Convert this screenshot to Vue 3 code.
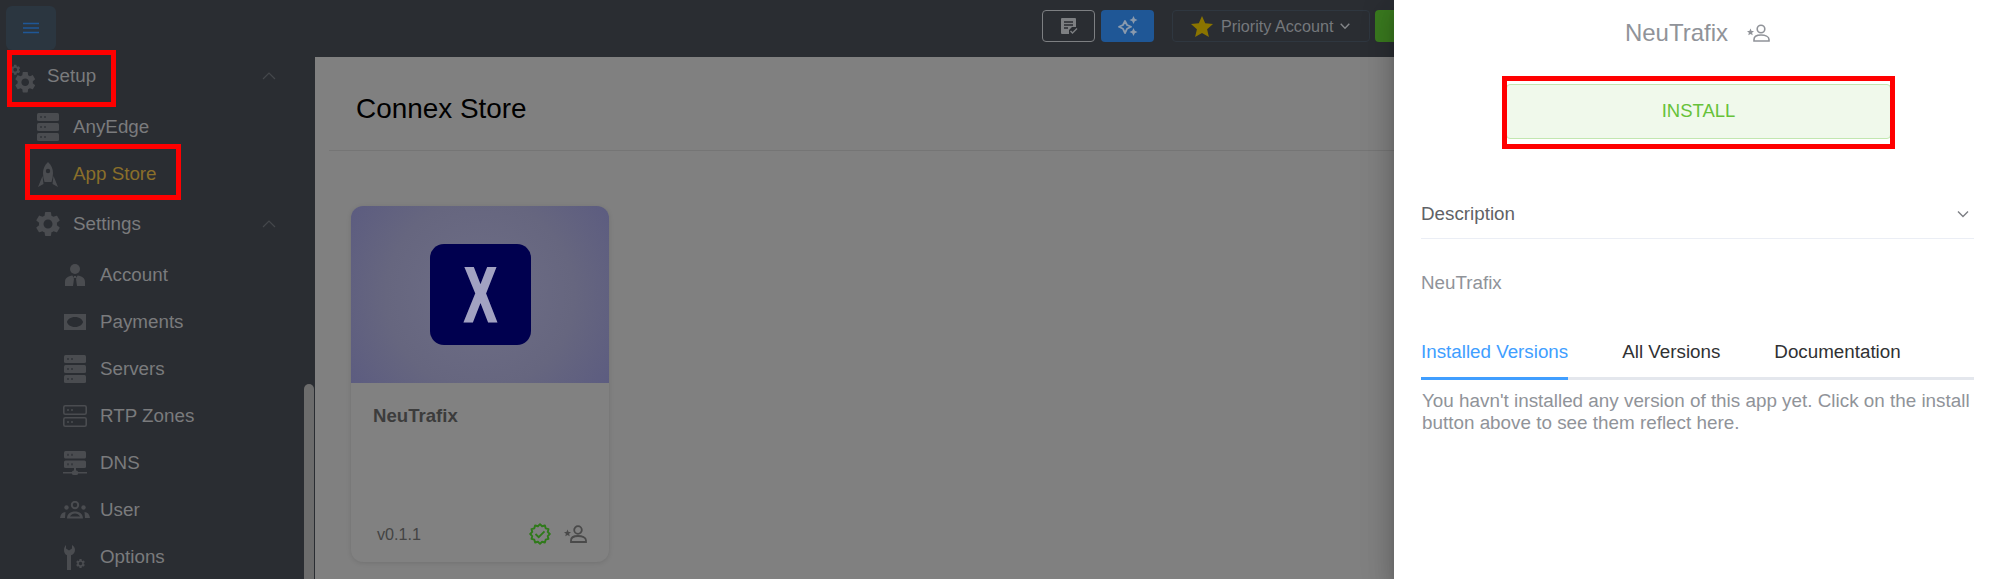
<script setup>
const rows = [
  { label: 'Setup', icon: 'gears', level: 1, chevron: true },
  { label: 'AnyEdge', icon: 'server3', level: 2 },
  { label: 'App Store', icon: 'rocket', level: 2, active: true },
  { label: 'Settings', icon: 'gear', level: 2, chevron: true },
  { label: 'Account', icon: 'person', level: 3 },
  { label: 'Payments', icon: 'money', level: 3 },
  { label: 'Servers', icon: 'server3', level: 3 },
  { label: 'RTP Zones', icon: 'server2', level: 3 },
  { label: 'DNS', icon: 'dns', level: 3 },
  { label: 'User', icon: 'group', level: 3 },
  { label: 'Options', icon: 'tools', level: 3 }
]
const tabs = ['Installed Versions', 'All Versions', 'Documentation']
const badge = Array.from({ length: 24 }, (_, i) => {
  const r = i % 2 ? 8 : 9.8
  const a = (i * Math.PI) / 12
  return `${(11 + r * Math.sin(a)).toFixed(2)},${(11 - r * Math.cos(a)).toFixed(2)}`
}).join(' ')
const GEAR = 'M19.14 12.94c.04-.3.06-.61.06-.94 0-.32-.02-.64-.07-.94l2.03-1.58c.18-.14.23-.41.12-.61l-1.92-3.32c-.12-.22-.37-.29-.59-.22l-2.39.96c-.5-.38-1.03-.7-1.62-.94l-.36-2.54c-.04-.24-.24-.41-.48-.41h-3.84c-.24 0-.43.17-.47.41l-.36 2.54c-.59.24-1.13.57-1.62.94l-2.39-.96c-.22-.08-.47 0-.59.22L2.74 8.87c-.12.21-.08.47.12.61l2.03 1.58c-.05.3-.09.63-.09.94s.02.64.07.94l-2.03 1.58c-.18.14-.23.41-.12.61l1.92 3.32c.12.22.37.29.59.22l2.39-.96c.5.38 1.03.7 1.62.94l.36 2.54c.05.24.24.41.48.41h3.84c.24 0 .44-.17.47-.41l.36-2.54c.59-.24 1.13-.56 1.62-.94l2.39.96c.22.08.47 0 .59-.22l1.92-3.32c.12-.22.07-.47-.12-.61l-2.01-1.58zM12 15.6c-1.98 0-3.6-1.62-3.6-3.6s1.62-3.6 3.6-3.6 3.6 1.62 3.6 3.6-1.62 3.6-3.6 3.6z'
</script>

<template>
  <div class="page">
    <header class="topbar">
      <button class="burger" aria-label="menu">
        <svg width="18" height="12" viewBox="0 0 18 12"><path d="M1 1.5h16M1 6h16M1 10.5h16" stroke="#1f5796" stroke-width="1.6" /></svg>
      </button>
      <div class="spacer"></div>
      <button class="tbtn outline" aria-label="notes">
        <svg width="18" height="18" viewBox="0 0 18 18">
          <path d="M2 1h13a1 1 0 0 1 1 1V10h-4l-3 3v4H2a1 1 0 0 1-1-1V2a1 1 0 0 1 1-1z" fill="#7d7f82" />
          <path d="M4 5h9M4 8h9M4 11h4" stroke="#2a2d32" stroke-width="1.5" />
          <path d="M10.5 14l2 2 4.5-4.5" fill="none" stroke="#7d7f82" stroke-width="1.4" />
        </svg>
      </button>
      <button class="tbtn blue" aria-label="spark">
        <svg width="20" height="20" viewBox="0 0 20 20" fill="none">
          <path d="M7 5l2 4 4 1.800-4 2L7 17l-2-4.200-4-2 4-1.800z" stroke="#8a9aad" stroke-width="1.800" stroke-linejoin="round" />
          <path d="M15.500 0l1.300 2.700L19.500 4l-2.700 1.300L15.500 8l-1.300-2.700L11.500 4l2.700-1.300zM15.500 12l1.300 2.700 2.700 1.300-2.700 1.300L15.500 20l-1.300-2.700-2.700-1.300 2.700-1.300z" fill="#8a9aad" />
        </svg>
      </button>
      <button class="priority">
        <svg width="22" height="21" viewBox="0 0 22 21"><path d="M11 0l3.200 7.300 7.800.7-5.900 5.200 1.800 7.800L11 16.900 4.100 21l1.800-7.800L0 8l7.800-.7z" fill="#8a7400" /></svg>
        <span>Priority Account</span>
        <svg class="pchev" width="10" height="7" viewBox="0 0 10 7" fill="none"><path d="M.7.8L5 5.200 9.300.8" stroke="#85878a" stroke-width="1.400" /></svg>
      </button>
      <button class="green" aria-label="action"></button>
    </header>

    <div class="body">
      <aside class="sidebar">
        <div
          v-for="row in rows"
          :key="row.label"
          class="row"
          :class="[`level${row.level}`, { active: row.active, head: row.chevron }]"
        >
          <span class="ico">
            <svg v-if="row.icon === 'gears'" width="36" height="36" viewBox="0 0 36 36" class="gears">
              <path :d="GEAR" transform="translate(8.500 11.500) scale(1.060)" />
              <path :d="GEAR" transform="translate(5 5.500) scale(.520)" />
            </svg>
            <svg v-else-if="row.icon === 'server3'" width="22" height="28" viewBox="0 0 22 28">
              <g v-for="y in [0, 10, 20]" :key="y">
                <rect :y="y" width="22" height="8" rx="1.500" />
                <rect x="3" :y="y + 3" width="2" height="2" class="hole" />
                <rect x="7" :y="y + 3" width="2" height="2" class="hole" />
              </g>
            </svg>
            <svg v-else-if="row.icon === 'rocket'" width="20" height="25" viewBox="0 0 20 25">
              <path d="M10 0c3.500 3 5 7 5 11 0 3-.5 6-1.500 9h-7C5.500 17 5 14 5 11c0-4 1.500-8 5-11z" />
              <path d="M4.500 14L0 25l5.500-3zM15.500 14L20 25l-5.500-3z" />
              <circle cx="10" cy="9" r="2.200" class="holefill" />
            </svg>
            <svg v-else-if="row.icon === 'gear'" width="30" height="30" viewBox="0 0 24 24">
              <path :d="GEAR" />
            </svg>
            <svg v-else-if="row.icon === 'person'" width="20" height="22" viewBox="0 0 20 22">
              <circle cx="10" cy="5" r="5" />
              <path d="M0 22v-4c0-4 3-6 7.500-6.500L9 15l-1 7zM20 22v-4c0-4-3-6-7.500-6.500L11 15l1 7zM9 12h2l.5 2h-3z" />
            </svg>
            <svg v-else-if="row.icon === 'money'" width="22" height="16" viewBox="0 0 22 16">
              <path fill-rule="evenodd" d="M0 0h22v16H0zM11 3C6.500 3 3.500 5.500 3 8c.5 2.500 3.500 5 8 5s7.500-2.500 8-5c-.5-2.500-3.500-5-8-5z" />
            </svg>
            <svg v-else-if="row.icon === 'server2'" width="24" height="22" viewBox="0 0 24 22" fill="none">
              <rect x=".8" y=".8" width="22.400" height="8.400" rx="1.500" class="line" />
              <rect x=".8" y="12.800" width="22.400" height="8.400" rx="1.500" class="line" />
              <path d="M4 5h6M4 17h6" class="line" stroke-dasharray="2 2" />
            </svg>
            <svg v-else-if="row.icon === 'dns'" width="24" height="24" viewBox="0 0 24 24">
              <g v-for="y in [0, 9.500]" :key="y">
                <rect x="1" :y="y" width="22" height="7.500" rx="1.500" />
                <rect x="4" :y="y + 2.800" width="2" height="2" class="hole" />
                <rect x="8" :y="y + 2.800" width="2" height="2" class="hole" />
              </g>
              <path d="M11 17h2v4h-2zM0 21h24v1.500H0z" />
              <rect x="9" y="19.500" width="6" height="4.500" rx="1.500" />
            </svg>
            <svg v-else-if="row.icon === 'group'" width="30" height="18" viewBox="0 0 30 18">
              <circle cx="15" cy="4" r="3.200" fill="none" stroke-width="2" class="line2" />
              <circle cx="6.500" cy="6.500" r="2.200" />
              <circle cx="23.500" cy="6.500" r="2.200" />
              <path d="M0 17c.5-4 2.500-6 5.500-6L5 17zM30 17c-.5-4-2.500-6-5.500-6l.5 6z" />
              <path d="M7 17.500c0-4.500 3.500-7 8-7s8 2.500 8 7zM10 15.500h10c-1-2-3-3-5-3s-4 1-5 3z" fill-rule="evenodd" />
            </svg>
            <svg v-else-if="row.icon === 'tools'" width="22" height="25" viewBox="0 0 22 25">
              <path d="M2 0v3.500L5 5.500l3-2V0c2 1 3 3 3 5 0 2.500-1.500 4.500-4 5.300V25H3V10.300C1 9.500 0 7.500 0 5 0 3 .8 1 2 0z" />
              <path :d="GEAR" transform="translate(11 13) scale(.460)" />
            </svg>
          </span>
          <span class="label">{{ row.label }}</span>
          <svg v-if="row.chevron" class="chev" width="14" height="8" viewBox="0 0 14 8" fill="none"><path d="M1 7l6-6 6 6" stroke="#45484c" stroke-width="1.200" /></svg>
        </div>
        <div class="scrollbar"></div>
      </aside>

      <main class="main">
        <h1 class="title">Connex Store</h1>
        <div class="divider"></div>
        <article class="card">
          <div class="thumb">
            <div class="logo"><span class="x">X</span></div>
          </div>
          <div class="card-body">
            <h2 class="card-name">NeuTrafix</h2>
            <div class="card-foot">
              <span class="version">v0.1.1</span>
              <svg class="verified" width="22" height="22" viewBox="0 0 22 22" fill="none">
                <polygon :points="badge" stroke="#2f7a1a" stroke-width="1.900" stroke-linejoin="round" />
                <path d="M6.500 11l3.200 3.200 5.800-5.800" stroke="#2f7a1a" stroke-width="1.900" />
              </svg>
              <svg width="23" height="18" viewBox="0 0 23 18" fill="none">
                <circle cx="14" cy="5" r="3.800" stroke="#4a4a4a" stroke-width="1.800" />
                <path d="M7 17v-1.500C7 12.500 10 11 14 11s8 1.500 8 4.500V17z" stroke="#4a4a4a" stroke-width="1.800" />
                <path d="M3.500 4.500l1.100 2.400 2.400.2-1.900 1.700.6 2.500-2.200-1.300-2.200 1.300.6-2.500L0 7.100l2.400-.2z" fill="#4a4a4a" />
              </svg>
            </div>
          </div>
        </article>
      </main>
    </div>

    <section class="drawer">
      <div class="d-title">
        <span>NeuTrafix</span>
        <svg width="23" height="18" viewBox="0 0 23 18" fill="none">
          <circle cx="14" cy="5" r="3.800" stroke="#909399" stroke-width="1.600" />
          <path d="M7 17v-1.500C7 12.500 10 11 14 11s8 1.500 8 4.500V17z" stroke="#909399" stroke-width="1.600" />
          <path d="M3.500 4.500l1.100 2.400 2.400.2-1.900 1.700.6 2.500-2.200-1.300-2.200 1.300.6-2.500L0 7.100l2.400-.2z" fill="#909399" />
        </svg>
      </div>
      <button class="install">INSTALL</button>
      <div class="collapse-head">
        <span>Description</span>
        <svg width="12" height="8" viewBox="0 0 12 8" fill="none"><path d="M1 1.500l5 5 5-5" stroke="#7d7f84" stroke-width="1.400" /></svg>
      </div>
      <p class="desc">NeuTrafix</p>
      <div class="tabs">
        <span v-for="(tab, i) in tabs" :key="tab" class="tab" :class="{ on: i === 0 }">{{ tab }}</span>
      </div>
      <p class="empty">You havn't installed any version of this app yet. Click on the install button above to see them reflect here.</p>
    </section>

    <div class="mark mark-setup"></div>
    <div class="mark mark-store"></div>
    <div class="mark mark-install"></div>
  </div>
</template>

<style>
html, body { margin: 0; background: #808080; }
</style>

<style scoped>
.page {
  position: relative;
  width: 2000px;
  height: 579px;
  overflow: hidden;
  display: flex;
  flex-direction: column;
  font-family: "Liberation Sans", Arial, sans-serif;
  background: #808080;
}
button { font: inherit; padding: 0; cursor: pointer; }
.topbar {
  flex: 0 0 57px;
  display: flex;
  align-items: flex-start;
  background: #2a2d32;
  padding: 10px 545px 0 6px;
  box-sizing: border-box;
}
.burger {
  width: 50px;
  height: 44px;
  margin-top: -4px;
  border: 0;
  border-radius: 6px;
  background: #2b3640;
  display: flex;
  align-items: center;
  justify-content: center;
}
.spacer { flex: 1; }
.tbtn {
  width: 53px;
  height: 32px;
  border-radius: 4px;
  display: flex;
  align-items: center;
  justify-content: center;
  margin-right: 6px;
}
.outline { background: transparent; border: 1px solid #7d7f82; }
.blue { background: #1f5796; border: 0; margin-right: 18px; }
.priority {
  width: 198px;
  height: 32px;
  box-sizing: border-box;
  border: 1px solid #2f3740;
  border-radius: 4px;
  background: #2a2d32;
  color: #75787c;
  font-size: 16.200px;
  display: flex;
  align-items: center;
  padding-left: 18px;
  gap: 8px;
  margin-right: 5px;
}
.pchev { margin-left: -1px; }
.green { width: 80px; height: 32px; border: 0; border-radius: 4px; background: #3a7a1f; }

.body { flex: 1; display: flex; min-height: 0; }
.sidebar {
  position: relative;
  flex: 0 0 315px;
  background: #2a2d32;
  overflow: hidden;
}
.row {
  height: 47px;
  display: flex;
  align-items: center;
  font-size: 18.800px;
  color: #7a7b7d;
}
.row.head { height: 38px; margin-bottom: 8.500px; }
.row.level2.head { margin-top: 7.500px; margin-bottom: 8.500px; }
.level1 { padding-left: 4px; }
.level2 { padding-left: 30px; }
.level3 { padding-left: 57px; }
.ico {
  flex: 0 0 36px;
  margin-right: 7px;
  display: flex;
  justify-content: center;
  align-items: center;
  fill: #4a4c50;
}
.gears { overflow: visible; }
.hole { fill: #2a2d32; opacity: .6; }
.holefill { fill: #2a2d32; }
.line { stroke: #4a4c50; stroke-width: 1.600; fill: none; }
.line2 { stroke: #4a4c50; }
.active { color: #8a6f2a; }
.chev { position: absolute; left: 262px; }
.scrollbar {
  position: absolute;
  left: 304px;
  top: 327px;
  width: 10px;
  height: 260px;
  border-radius: 5px 5px 0 0;
  background: #6c6c6c;
}

.main { flex: 1; background: #808080; padding-left: 14px; min-width: 0; }
.title {
  margin: 0;
  padding: 10px 0 0 27px;
  height: 93px;
  box-sizing: border-box;
  display: flex;
  align-items: center;
  font-weight: 400;
  font-size: 27.900px;
  color: #000;
}
.divider { height: 1px; background: #757575; }
.card {
  width: 258px;
  height: 356px;
  margin: 55px 0 0 22px;
  border-radius: 12px;
  overflow: hidden;
  box-shadow: 0 1px 5px rgba(0, 0, 0, .12);
  display: flex;
  flex-direction: column;
  background: #818181;
}
.thumb {
  flex: 0 0 177px;
  background: radial-gradient(circle at center, #6e6e86 0%, #66667f 60%, #5c5c80 100%);
  display: flex;
  align-items: center;
  justify-content: center;
}
.logo {
  width: 101px;
  height: 101px;
  border-radius: 14px;
  background: #00004f;
  display: flex;
  align-items: center;
  justify-content: center;
  overflow: hidden;
}
.x {
  font-weight: 700;
  font-size: 76px;
  line-height: 1;
  color: #a2a2c2;
  -webkit-text-stroke: 3px #a2a2c2;
  transform: scaleX(.62);
}
.card-body { flex: 1; display: flex; flex-direction: column; padding: 22px 22px 17px; }
.card-name { margin: 0; font-size: 18.600px; line-height: 22px; color: #3c3c3c; font-weight: 700; }
.card-foot { margin-top: auto; display: flex; align-items: center; }
.version { margin-left: 4px; font-size: 16.200px; color: #444; flex: 1; }
.verified { margin-right: 13px; }

.drawer {
  position: absolute;
  top: 0;
  right: 0;
  bottom: 0;
  width: 606px;
  box-sizing: border-box;
  padding: 0 26px 0 27px;
  background: #fff;
  display: flex;
  flex-direction: column;
  box-shadow: 0 8px 10px -5px rgba(0, 0, 0, .2), 0 16px 24px 2px rgba(0, 0, 0, .14), 0 6px 30px 5px rgba(0, 0, 0, .12);
}
.d-title {
  height: 65px;
  display: flex;
  align-items: center;
  justify-content: center;
  gap: 19px;
  font-size: 24px;
  color: #909399;
  flex: none;
}
.install {
  flex: none;
  width: 385px;
  height: 55px;
  margin: 19px 0 0 85px;
  background: #f0f9eb;
  border: 1px solid #c2e7b0;
  border-radius: 4px;
  color: #67c23a;
  font-size: 18.500px;
  padding-bottom: 2px;
}
.collapse-head {
  flex: none;
  height: 49px;
  padding: 0 5px 0 0;
  box-sizing: border-box;
  display: flex;
  align-items: center;
  justify-content: space-between;
  border-bottom: 1px solid #ebeef5;
  color: #606266;
  font-size: 18.800px;
  margin-top: 51px;
}
.desc { margin: 33px 0 0; font-size: 18.800px; line-height: 22px; color: #909399; }
.tabs {
  display: flex;
  gap: 54px;
  height: 50px;
  align-items: flex-start;
  border-bottom: 3px solid #e4e7ed;
  box-sizing: border-box;
  margin-top: 36px;
  flex: none;
}
.tab {
  height: 50px;
  box-sizing: border-box;
  line-height: 44px;
  font-size: 18.800px;
  color: #303133;
}
.tab.on { color: #409eff; border-bottom: 3px solid #409eff; }
.empty {
  margin: 10px 0 0 1px;
  font-size: 18.850px;
  line-height: 22px;
  color: #909399;
}
.mark {
  position: absolute;
  box-sizing: border-box;
  border: 5px solid #ff0000;
}
.mark-setup { left: 7px; top: 50px; width: 109px; height: 57px; }
.mark-store { left: 25px; top: 144px; width: 156px; height: 56px; }
.mark-install { left: 1502px; top: 76px; width: 393px; height: 73px; }
</style>
